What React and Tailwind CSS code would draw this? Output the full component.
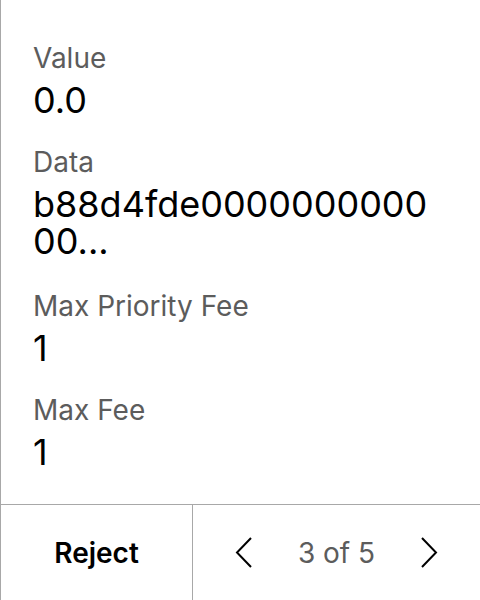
import React from 'react'

const fields = [
  { label: 'Value', value: '0.0' },
  { label: 'Data', value: 'b88d4fde000000000000...', wide: true },
  { label: 'Max Priority Fee', value: '1' },
  { label: 'Max Fee', value: '1' },
]

const App = () => {
  return (
    <div className="w-[480px] h-[600px] bg-white border-l border-[#a8a8a8] flex flex-col font-['Inter',sans-serif]">
      <div className="flex-1 px-8 pt-[41px]">
        {fields.map((f) => (
          <div key={f.label} className={f.wide ? 'mb-[29px]' : 'mb-[26px]'}>
            <div className="text-[28px] leading-[34px] text-[#5c5c5c]">{f.label}</div>
            <div className="text-[36px] leading-[37px] text-black break-all mt-[7px]">{f.value}</div>
          </div>
        ))}
      </div>
      <div className="h-[96px] border-t border-[#a8a8a8] flex">
        <button className="w-[192px] border-r border-[#a8a8a8] text-[28px] font-semibold text-black">Reject</button>
        <div className="flex-1 flex items-center justify-between px-[42px]">
          <svg width="17" height="31" viewBox="0 0 17 31" fill="none" stroke="black" strokeWidth="2">
            <path d="M16 1 L2 15.5 L16 30" />
          </svg>
          <span className="text-[28px] text-[#5c5c5c]">3 of 5</span>
          <svg width="17" height="31" viewBox="0 0 17 31" fill="none" stroke="black" strokeWidth="2">
            <path d="M1 1 L15 15.5 L1 30" />
          </svg>
        </div>
      </div>
    </div>
  )
}

export default App
